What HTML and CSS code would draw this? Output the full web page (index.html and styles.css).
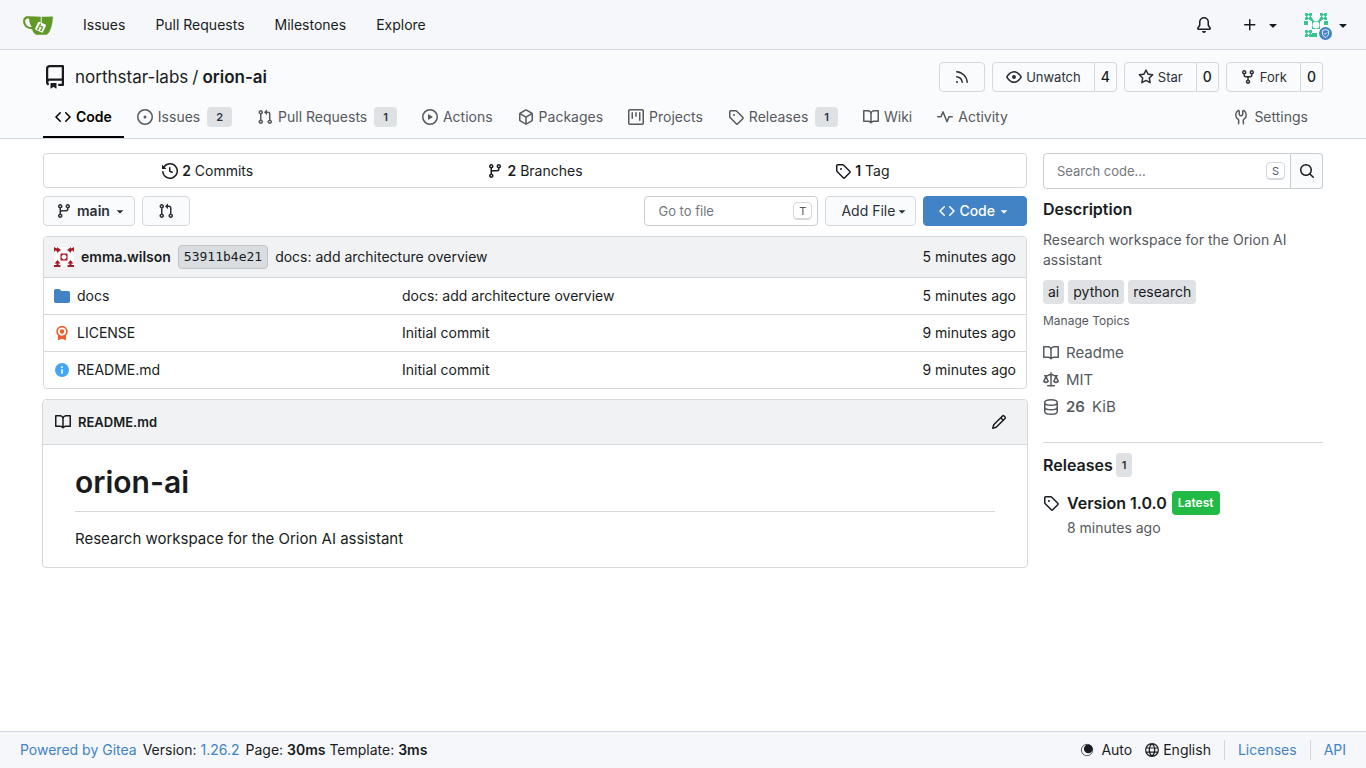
FILE: index.html
```html
<!DOCTYPE html>
<html lang="en">
<head>
  <meta charset="UTF-8">
  <meta name="viewport" content="width=device-width, initial-scale=1.0">
  <title>northstar-labs/orion-ai - Gitea</title>
  <link rel="stylesheet" href="styles.css">
</head>
<body>

  <!-- Icon sprite -->
  <svg class="sprite" aria-hidden="true">
    <symbol id="i-code" viewBox="0 0 16 16"><path d="m11.28 3.22 4.25 4.25a.75.75 0 0 1 0 1.06l-4.25 4.25a.749.749 0 0 1-1.275-.326.75.75 0 0 1 .215-.734L13.94 8l-3.72-3.72a.749.749 0 0 1 .326-1.275.75.75 0 0 1 .734.215m-6.56 0a.751.751 0 0 1 1.042.018.751.751 0 0 1 .018 1.042L2.06 8l3.72 3.72a.749.749 0 0 1-.326 1.275.75.75 0 0 1-.734-.215L.47 8.53a.75.75 0 0 1 0-1.06Z"/></symbol>
    <symbol id="i-issue" viewBox="0 0 16 16"><path d="M8 9.5a1.5 1.5 0 1 0 0-3 1.5 1.5 0 0 0 0 3"/><path d="M8 0a8 8 0 1 1 0 16A8 8 0 0 1 8 0M1.5 8a6.5 6.5 0 1 0 13 0 6.5 6.5 0 0 0-13 0"/></symbol>
    <symbol id="i-pull" viewBox="0 0 16 16"><path d="M1.5 3.25a2.25 2.25 0 1 1 3 2.122v5.256a2.251 2.251 0 1 1-1.5 0V5.372A2.25 2.25 0 0 1 1.5 3.25m5.677-.177L9.573.677A.25.25 0 0 1 10 .854V2.5h1A2.5 2.5 0 0 1 13.5 5v5.628a2.251 2.251 0 1 1-1.5 0V5a1 1 0 0 0-1-1h-1v1.646a.25.25 0 0 1-.427.177L7.177 3.427a.25.25 0 0 1 0-.354M3.75 2.5a.75.75 0 1 0 0 1.5.75.75 0 0 0 0-1.5m0 9.5a.75.75 0 1 0 0 1.5.75.75 0 0 0 0-1.5m8.25.75a.75.75 0 1 0 1.5 0 .75.75 0 0 0-1.5 0"/></symbol>
    <symbol id="i-play" viewBox="0 0 16 16"><path d="M8 0a8 8 0 1 1 0 16A8 8 0 0 1 8 0M1.5 8a6.5 6.5 0 1 0 13 0 6.5 6.5 0 0 0-13 0m4.879-2.773 4.264 2.559a.25.25 0 0 1 0 .428l-4.264 2.559A.25.25 0 0 1 6 10.559V5.442a.25.25 0 0 1 .379-.215"/></symbol>
    <symbol id="i-package" viewBox="0 0 16 16"><path d="m8.878.392 5.25 3.045c.54.314.872.89.872 1.514v6.098a1.75 1.75 0 0 1-.872 1.514l-5.25 3.045a1.75 1.75 0 0 1-1.756 0l-5.25-3.045A1.75 1.75 0 0 1 1 11.049V4.951c0-.624.332-1.201.872-1.514L7.122.392a1.75 1.75 0 0 1 1.756 0M7.875 1.69l-4.63 2.685L8 7.133l4.755-2.758-4.63-2.685a.25.25 0 0 0-.25 0M2.5 5.677v5.372c0 .09.047.171.125.216l4.625 2.683V8.432Zm6.25 8.271 4.625-2.683a.25.25 0 0 0 .125-.216V5.677L8.75 8.432Z"/></symbol>
    <symbol id="i-project" viewBox="0 0 16 16"><path d="M1.75 0h12.5C15.216 0 16 .784 16 1.75v12.5A1.75 1.75 0 0 1 14.25 16H1.75A1.75 1.75 0 0 1 0 14.25V1.75C0 .784.784 0 1.75 0M1.5 1.75v12.5c0 .138.112.25.25.25h12.5a.25.25 0 0 0 .25-.25V1.75a.25.25 0 0 0-.25-.25H1.75a.25.25 0 0 0-.25.25M11.75 3a.75.75 0 0 1 .75.75v7.5a.75.75 0 0 1-1.5 0v-7.5a.75.75 0 0 1 .75-.75m-8.25.75a.75.75 0 0 1 1.5 0v5.5a.75.75 0 0 1-1.5 0ZM8 3a.75.75 0 0 1 .75.75v3.5a.75.75 0 0 1-1.5 0v-3.5A.75.75 0 0 1 8 3"/></symbol>
    <symbol id="i-tag" viewBox="0 0 16 16"><path d="M1 7.775V2.75C1 1.784 1.784 1 2.75 1h5.025c.464 0 .91.184 1.238.513l6.25 6.25a1.75 1.75 0 0 1 0 2.474l-5.026 5.026a1.75 1.75 0 0 1-2.474 0l-6.25-6.25A1.75 1.75 0 0 1 1 7.775m1.5 0c0 .066.026.13.073.177l6.25 6.25a.25.25 0 0 0 .354 0l5.025-5.025a.25.25 0 0 0 0-.354l-6.25-6.25a.25.25 0 0 0-.177-.073H2.75a.25.25 0 0 0-.25.25ZM6 5a1 1 0 1 1 0 2 1 1 0 0 1 0-2"/></symbol>
    <symbol id="i-book" viewBox="0 0 16 16"><path d="M0 1.75A.75.75 0 0 1 .75 1h4.253c1.227 0 2.317.59 3 1.501A3.74 3.74 0 0 1 11.006 1h4.245a.75.75 0 0 1 .75.75v10.5a.75.75 0 0 1-.75.75h-4.507a2.25 2.25 0 0 0-1.591.659l-.622.621a.75.75 0 0 1-1.06 0l-.622-.621A2.25 2.25 0 0 0 5.258 13H.75a.75.75 0 0 1-.75-.75Zm7.251 10.324.004-5.073-.002-2.253A2.25 2.25 0 0 0 5.003 2.5H1.5v9h3.757a3.75 3.75 0 0 1 1.994.574M8.755 4.75l-.004 7.322a3.75 3.75 0 0 1 1.992-.572H14.5v-9h-3.495a2.25 2.25 0 0 0-2.25 2.25"/></symbol>
    <symbol id="i-pulse" viewBox="0 0 16 16"><path d="M6 2c.306 0 .582.187.696.471L10 10.731l1.304-3.26A.75.75 0 0 1 12 7h3.25a.75.75 0 0 1 0 1.5h-2.742l-1.812 4.528a.751.751 0 0 1-1.392 0L6 4.77 4.696 8.03A.75.75 0 0 1 4 8.5H.75a.75.75 0 0 1 0-1.5h2.742l1.812-4.529A.75.75 0 0 1 6 2"/></symbol>
    <symbol id="i-tools" viewBox="0 0 16 16"><path d="M5.433 2.304A4.492 4.492 0 0 0 3.5 6c0 1.598.832 3.002 2.09 3.802.518.328.929.923.902 1.64v.008l-.164 3.337a.75.75 0 1 1-1.498-.073l.163-3.33c.002-.085-.05-.216-.207-.316A5.996 5.996 0 0 1 2 6a5.994 5.994 0 0 1 2.567-4.92 1.482 1.482 0 0 1 1.673-.04c.462.296.76.827.76 1.423v2.82c0 .082.041.16.11.206l.75.51a.25.25 0 0 0 .28 0l.75-.51A.249.249 0 0 0 9 5.282V2.463c0-.596.298-1.127.76-1.423a1.482 1.482 0 0 1 1.673.04A5.994 5.994 0 0 1 14 6a5.996 5.996 0 0 1-2.786 5.068c-.157.1-.209.23-.207.315l.163 3.33a.752.752 0 0 1-1.094.714.75.75 0 0 1-.404-.64l-.164-3.345c-.027-.717.384-1.312.902-1.64A4.496 4.496 0 0 0 12.5 6a4.492 4.492 0 0 0-1.933-3.696c-.024.017-.067.067-.067.159v2.82a1.75 1.75 0 0 1-.767 1.448l-.75.51a1.75 1.75 0 0 1-1.966 0l-.75-.51A1.75 1.75 0 0 1 5.5 5.282V2.463c0-.092-.043-.142-.067-.159"/></symbol>
    <symbol id="i-history" viewBox="0 0 16 16"><path d="m.427 1.927 1.215 1.215a8.002 8.002 0 1 1-1.6 5.685.75.75 0 1 1 1.493-.154 6.5 6.5 0 1 0 1.18-4.458l1.358 1.358A.25.25 0 0 1 3.896 6H.25A.25.25 0 0 1 0 5.75V2.104a.25.25 0 0 1 .427-.177M7.75 4a.75.75 0 0 1 .75.75v2.992l2.028.812a.75.75 0 0 1-.557 1.392l-2.5-1A.75.75 0 0 1 7 8.25v-3.5A.75.75 0 0 1 7.75 4"/></symbol>
    <symbol id="i-branch" viewBox="0 0 16 16"><path d="M9.5 3.25a2.25 2.25 0 1 1 3 2.122V6A2.5 2.5 0 0 1 10 8.5H6a1 1 0 0 0-1 1v1.128a2.251 2.251 0 1 1-1.5 0V5.372a2.25 2.25 0 1 1 1.5 0v1.836A2.5 2.5 0 0 1 6 7h4a1 1 0 0 0 1-1v-.628A2.25 2.25 0 0 1 9.5 3.25m-6 0a.75.75 0 1 0 1.5 0 .75.75 0 0 0-1.5 0m8.25-.75a.75.75 0 1 0 0 1.5.75.75 0 0 0 0-1.5M4.25 12a.75.75 0 1 0 0 1.5.75.75 0 0 0 0-1.5"/></symbol>
    <symbol id="i-repo" viewBox="0 0 16 16"><path d="M2 2.5A2.5 2.5 0 0 1 4.5 0h8.75a.75.75 0 0 1 .75.75v12.5a.75.75 0 0 1-.75.75h-2.5a.75.75 0 0 1 0-1.5h1.75v-2h-8a1 1 0 0 0-.714 1.7.75.75 0 1 1-1.072 1.05A2.5 2.5 0 0 1 2 11.5Zm10.5-1h-8a1 1 0 0 0-1 1v6.708A2.5 2.5 0 0 1 4.5 9h8ZM5 12.25a.25.25 0 0 1 .25-.25h3.5a.25.25 0 0 1 .25.25v3.25a.25.25 0 0 1-.4.2l-1.45-1.087a.25.25 0 0 0-.3 0L5.4 15.7a.25.25 0 0 1-.4-.2Z"/></symbol>
    <symbol id="i-rss" viewBox="0 0 16 16"><path d="M2.002 2.725a.75.75 0 0 1 .797-.699C8.79 2.42 13.58 7.21 13.974 13.201a.75.75 0 0 1-1.497.098 10.502 10.502 0 0 0-9.776-9.776.747.747 0 0 1-.7-.798ZM2.84 7.05h-.002a7.002 7.002 0 0 1 6.113 6.111.75.75 0 0 1-1.49.178 5.503 5.503 0 0 0-4.8-4.8.75.75 0 0 1 .179-1.489ZM2 13a1 1 0 1 1 2 0 1 1 0 0 1-2 0"/></symbol>
    <symbol id="i-eye" viewBox="0 0 16 16"><path d="M8 2c1.981 0 3.671.992 4.933 2.078 1.27 1.091 2.187 2.345 2.637 3.023a1.62 1.62 0 0 1 0 1.798c-.45.678-1.367 1.932-2.637 3.023C11.67 13.008 9.981 14 8 14s-3.671-.992-4.933-2.078C1.797 10.83.88 9.576.43 8.898a1.62 1.62 0 0 1 0-1.798c.45-.677 1.367-1.931 2.637-3.022C4.33 2.992 6.019 2 8 2M1.679 7.932a.12.12 0 0 0 0 .136c.411.622 1.241 1.75 2.366 2.717C5.176 11.758 6.527 12.5 8 12.5s2.825-.742 3.955-1.715c1.124-.967 1.954-2.096 2.366-2.717a.12.12 0 0 0 0-.136c-.412-.621-1.242-1.75-2.366-2.717C10.824 4.242 9.473 3.5 8 3.5s-2.824.742-3.955 1.715c-1.124.967-1.954 2.096-2.366 2.717M8 10a2 2 0 1 1 0-4 2 2 0 0 1 0 4"/></symbol>
    <symbol id="i-star" viewBox="0 0 16 16"><path d="M8 .25a.75.75 0 0 1 .673.418l1.882 3.815 4.21.612a.75.75 0 0 1 .416 1.279l-3.046 2.97.719 4.192a.751.751 0 0 1-1.088.791L8 12.347l-3.766 1.98a.75.75 0 0 1-1.088-.79l.72-4.194L.818 6.374a.75.75 0 0 1 .416-1.28l4.21-.611L7.327.668A.75.75 0 0 1 8 .25m0 2.445L6.615 5.5a.75.75 0 0 1-.564.41l-3.097.45 2.24 2.184a.75.75 0 0 1 .216.664l-.528 3.084 2.769-1.456a.75.75 0 0 1 .698 0l2.77 1.456-.53-3.084a.75.75 0 0 1 .216-.664l2.24-2.183-3.096-.45a.75.75 0 0 1-.564-.41z"/></symbol>
    <symbol id="i-fork" viewBox="0 0 16 16"><path d="M5 5.372v.878c0 .414.336.75.75.75h4.5a.75.75 0 0 0 .75-.75v-.878a2.25 2.25 0 1 1 1.5 0v.878a2.25 2.25 0 0 1-2.25 2.25h-1.5v2.128a2.251 2.251 0 1 1-1.5 0V8.5h-1.5A2.25 2.25 0 0 1 3.5 6.25v-.878a2.25 2.25 0 1 1 1.5 0M5 3.25a.75.75 0 1 0-1.5 0 .75.75 0 0 0 1.5 0m6.75.75a.75.75 0 1 0 0-1.5.75.75 0 0 0 0 1.5m-3 8.75a.75.75 0 1 0-1.5 0 .75.75 0 0 0 1.5 0"/></symbol>
    <symbol id="i-bell" viewBox="0 0 16 16"><path d="M8 16a2 2 0 0 0 1.985-1.75c.017-.137-.097-.25-.235-.25h-3.5c-.138 0-.252.113-.235.25A2 2 0 0 0 8 16M3 5a5 5 0 0 1 10 0v2.947q0 .076.042.139l1.703 2.555A1.519 1.519 0 0 1 13.482 13H2.518a1.516 1.516 0 0 1-1.263-2.36l1.703-2.554A.26.26 0 0 0 3 7.947Zm5-3.5A3.5 3.5 0 0 0 4.5 5v2.947c0 .346-.102.683-.294.97l-1.703 2.556a.017.017 0 0 0-.003.01l.001.006q0 .004.004.006l.006.004.007.001h10.964l.007-.001.006-.004.004-.006.001-.007-.003-.01-1.703-2.554a1.75 1.75 0 0 1-.294-.97V5A3.5 3.5 0 0 0 8 1.5"/></symbol>
    <symbol id="i-plus" viewBox="0 0 16 16"><path d="M7.75 2a.75.75 0 0 1 .75.75V7h4.25a.75.75 0 0 1 0 1.5H8.5v4.25a.75.75 0 0 1-1.5 0V8.5H2.75a.75.75 0 0 1 0-1.5H7V2.75A.75.75 0 0 1 7.75 2"/></symbol>
    <symbol id="i-down" viewBox="0 0 16 16"><path d="m4.427 7.427 3.396 3.396a.25.25 0 0 0 .354 0l3.396-3.396A.25.25 0 0 0 11.396 7H4.604a.25.25 0 0 0-.177.427"/></symbol>
    <symbol id="i-search" viewBox="0 0 16 16"><path d="M10.68 11.74a6 6 0 0 1-7.922-8.982 6 6 0 0 1 8.982 7.922l3.04 3.04a.749.749 0 0 1-.326 1.275.75.75 0 0 1-.734-.215ZM11.5 7a4.499 4.499 0 1 0-8.997 0A4.499 4.499 0 0 0 11.5 7"/></symbol>
    <symbol id="i-pencil" viewBox="0 0 16 16"><path d="M11.013 1.427a1.75 1.75 0 0 1 2.474 0l1.086 1.086a1.75 1.75 0 0 1 0 2.474l-8.61 8.61c-.21.21-.47.364-.756.445l-3.251.93a.75.75 0 0 1-.927-.928l.929-3.25c.081-.286.235-.547.445-.758ZM11.189 6.25 9.75 4.81l-6.286 6.287a.25.25 0 0 0-.064.108l-.558 1.953 1.953-.558a.25.25 0 0 0 .108-.064Zm1.238-3.763a.25.25 0 0 0-.354 0L10.811 3.75l1.439 1.44 1.263-1.263a.25.25 0 0 0 0-.354Z"/></symbol>
    <symbol id="i-folder" viewBox="0 0 16 16"><path d="M1.75 1A1.75 1.75 0 0 0 0 2.75v10.5C0 14.216.784 15 1.75 15h12.5A1.75 1.75 0 0 0 16 13.25v-8.5A1.75 1.75 0 0 0 14.25 3H7.5a.25.25 0 0 1-.2-.1l-.9-1.2C6.07 1.26 5.55 1 5 1Z"/></symbol>
    <symbol id="i-license" viewBox="0 0 16 16"><circle cx="8" cy="6.5" r="4.9" fill="none" stroke="currentColor" stroke-width="1.6"/><circle cx="8" cy="6.5" r="2.2"/><path d="M4 10.2 8 12.2l4-2V15.2L8 13.8l-4 1.4Z"/></symbol>
    <symbol id="i-info" viewBox="0 0 16 16"><path fill-rule="evenodd" d="M8 1a7 7 0 1 0 0 14A7 7 0 0 0 8 1M7.200 4.300h1.600v1.600H7.200ZM7.200 7.200h1.600v4.500H7.200Z"/></symbol>
    <symbol id="i-law" viewBox="0 0 16 16"><path d="M8 .8v12.800M4.700 13.700h6.600M1.700 3.800h2.600L6.400 2.700h3.200l2.100 1.100h2.600M3 4.500.8 9.400c1.200 1.100 3.200 1.100 4.400 0ZM13 4.500l-2.200 4.900c1.200 1.100 3.200 1.100 4.400 0Z" fill="none" stroke="currentColor" stroke-width="1.500" stroke-linecap="round" stroke-linejoin="round"/></symbol>
    <symbol id="i-database" viewBox="0 0 16 16"><path d="M14.250 3.500c0 1.500-2.800 2.750-6.250 2.750S1.750 5 1.750 3.500 4.550.75 8 .75s6.250 1.250 6.250 2.750v9c0 1.500-2.800 2.750-6.250 2.750S1.750 14 1.750 12.500v-9M1.750 8c0 1.500 2.800 2.750 6.250 2.750S14.250 9.500 14.250 8" fill="none" stroke="currentColor" stroke-width="1.500"/></symbol>
    <symbol id="i-globe" viewBox="0 0 16 16"><path d="M8 .75a7.250 7.250 0 1 0 0 14.500A7.250 7.250 0 0 0 8 .75C5.900 2.600 4.900 5 4.900 8s1 5.400 3.100 7.250C10.100 13.400 11.100 11 11.100 8S10.100 2.600 8 .75M1.200 5.700h13.600M1.200 10.300h13.600" fill="none" stroke="currentColor" stroke-width="1.400"/></symbol>
    <symbol id="i-auto" viewBox="0 0 16 16"><circle cx="8" cy="8" r="6.500" fill="none" stroke="currentColor" stroke-width=".8"/><circle cx="9.500" cy="6.700" r="5"/></symbol>
    <!-- identicon tiles -->
    <symbol id="tile-cross" viewBox="0 0 6 6"><path d="M0 0h2l1 1 1-1h2v2L5 3l1 1v2H4L3 5 2 6H0V4l1-1-1-1Z"/><path d="M3 1.700 4.300 3 3 4.300 1.700 3Z" fill="#fff"/></symbol>
    <symbol id="tile-arrow" viewBox="0 0 7 7"><path d="M0 0 3 1.500V0l4 3-4 3V4.200L1.500 3.500 0 5Z"/></symbol>
  </svg>

  <nav class="navbar">
    <div class="navbar-left">
      <a class="logo" href="#" aria-label="Dashboard">
        <svg width="30" height="30" viewBox="0 0 30 30">
          <path d="M5.500 6.300C2.300 5.900 0 8 .1 11.300c.1 4.700 3.500 7.800 9 7.900.8 2.800 2.200 5 4.300 5.500h10c3.200-.5 6-8.700 6.500-17.100.1-.8-.3-1.200-1-1.200-7 .4-15 .4-23.400-.1" fill="#609926"/>
          <path d="M3.600 8.700C1.900 9.400 1.800 12 3 14.300c1 2 3 2.900 5.700 2.800C7.200 14.800 6.300 12 6 8.700c-.8-.2-1.700-.3-2.400 0" fill="#fff"/>
          <path d="M18.200 6.300v7" stroke="#fff" stroke-width=".9"/>
          <rect x="13.200" y="12.800" width="8.600" height="8.800" rx="1" transform="rotate(25 17.500 17.200)" fill="#fff"/>
          <path d="m17.600 13.500-2.700 5.800M16.600 15.800l3 1.300-1.500 3.300" fill="none" stroke="#609926" stroke-width="1.200"/>
          <circle cx="15" cy="19" r=".9" fill="#609926"/>
          <circle cx="18" cy="20.300" r=".9" fill="#609926"/>
        </svg>
      </a>
      <a href="#">Issues</a>
      <a href="#">Pull Requests</a>
      <a href="#">Milestones</a>
      <a href="#">Explore</a>
    </div>
    <div class="navbar-right">
      <a href="#" aria-label="Notifications"><svg class="icon"><use href="#i-bell"/></svg></a>
      <button class="menu-button" aria-label="Create">
        <svg class="icon"><use href="#i-plus"/></svg>
        <svg class="icon"><use href="#i-down"/></svg>
      </button>
      <button class="menu-button profile" aria-label="Profile">
        <span class="avatar-wrap">
          <svg width="24" height="24" viewBox="0 0 24 24" fill="#34c792">
            <rect width="24" height="24" fill="#fff"/>
            <use href="#tile-cross" x="1" y="0" width="7" height="7"/>
            <use href="#tile-cross" x="16" y="0" width="7" height="7"/>
            <path d="M0 8h4v4H0ZM20 8h4v4h-4ZM8 5l2 3H6ZM16 5l-2 3h4ZM8 20h5v4H8Z"/>
            <rect x="8" y="8" width="8" height="8"/>
            <circle cx="12" cy="12" r="3.500" fill="#fff"/>
            <use href="#tile-cross" x="1" y="17" width="7" height="7"/>
          </svg>
          <svg class="admin-badge" viewBox="0 0 13 13">
            <circle cx="6.500" cy="6.500" r="6.500" fill="#4183c4"/>
            <path d="M6.500 2.500 9.600 3.700v2.500c0 2-1.200 3.300-3.100 4.200-1.900-.9-3.100-2.200-3.100-4.200V3.700ZM5 6.300l1.100 1.100 2-2" fill="none" stroke="#fff" stroke-width=".9"/>
          </svg>
        </span>
        <svg class="icon"><use href="#i-down"/></svg>
      </button>
    </div>
  </nav>

  <header class="repo-header">
    <div class="container">
      <div class="repo-title-row">
        <div class="repo-title">
          <svg class="icon icon-24"><use href="#i-repo"/></svg>
          <div><a href="#">northstar-labs</a><span class="slash">/</span><a class="repo-name" href="#">orion-ai</a></div>
        </div>
        <div class="repo-buttons">
          <button class="button rss" aria-label="RSS Feed"><svg class="icon"><use href="#i-rss"/></svg></button>
          <div class="labeled-button">
            <button class="button"><svg class="icon"><use href="#i-eye"/></svg>Unwatch</button>
            <a class="count" href="#">4</a>
          </div>
          <div class="labeled-button">
            <button class="button"><svg class="icon"><use href="#i-star"/></svg>Star</button>
            <a class="count" href="#">0</a>
          </div>
          <div class="labeled-button">
            <button class="button"><svg class="icon"><use href="#i-fork"/></svg>Fork</button>
            <a class="count" href="#">0</a>
          </div>
        </div>
      </div>
      <nav class="tabs">
        <a class="tab active" href="#"><svg class="icon"><use href="#i-code"/></svg>Code</a>
        <a class="tab" href="#"><svg class="icon"><use href="#i-issue"/></svg>Issues<span class="label">2</span></a>
        <a class="tab" href="#"><svg class="icon"><use href="#i-pull"/></svg>Pull Requests<span class="label">1</span></a>
        <a class="tab" href="#"><svg class="icon"><use href="#i-play"/></svg>Actions</a>
        <a class="tab" href="#"><svg class="icon"><use href="#i-package"/></svg>Packages</a>
        <a class="tab" href="#"><svg class="icon"><use href="#i-project"/></svg>Projects</a>
        <a class="tab" href="#"><svg class="icon"><use href="#i-tag"/></svg>Releases<span class="label">1</span></a>
        <a class="tab" href="#"><svg class="icon"><use href="#i-book"/></svg>Wiki</a>
        <a class="tab" href="#"><svg class="icon"><use href="#i-pulse"/></svg>Activity</a>
        <a class="tab settings" href="#"><svg class="icon"><use href="#i-tools"/></svg>Settings</a>
      </nav>
    </div>
  </header>

  <main class="container repo-grid">
    <div class="repo-main">
      <div class="stats">
        <a href="#"><svg class="icon"><use href="#i-history"/></svg><span><b>2</b> Commits</span></a>
        <a href="#"><svg class="icon"><use href="#i-branch"/></svg><span><b>2</b> Branches</span></a>
        <a href="#"><svg class="icon"><use href="#i-tag"/></svg><span><b>1</b> Tag</span></a>
      </div>

      <div class="toolbar">
        <button class="button branch"><svg class="icon"><use href="#i-branch"/></svg><b>main</b><svg class="icon caret"><use href="#i-down"/></svg></button>
        <button class="button compare" aria-label="Compare"><svg class="icon"><use href="#i-pull"/></svg></button>
        <div class="file-search">
          <input type="text" placeholder="Go to file" aria-label="Go to file">
          <kbd>T</kbd>
        </div>
        <button class="button add-file">Add File<svg class="icon caret"><use href="#i-down"/></svg></button>
        <button class="button primary"><svg class="icon"><use href="#i-code"/></svg>Code<svg class="icon caret"><use href="#i-down"/></svg></button>
      </div>

      <table class="files">
        <colgroup>
          <col class="col-name">
          <col>
          <col class="col-age">
        </colgroup>
        <thead>
          <tr>
            <th colspan="2">
              <div class="last-commit">
                <svg width="20" height="20" viewBox="0 0 20 20" fill="#a51d24">
                  <rect width="20" height="20" fill="#fff"/>
                  <use href="#tile-arrow" x="0" y="0" width="7" height="7"/>
                  <use href="#tile-arrow" x="0" y="0" width="7" height="7" transform="matrix(-1 0 0 1 20 0)"/>
                  <path d="M6.500 6.500h7v7h-7Zm3.500 1L8 8.500 7.500 10l.5 1.500 2 1 2-1 .5-1.500-.5-1.500Z" fill-rule="evenodd"/>
                  <path d="m3.500 13 3 3.500H4.500V18H6.500v2H0v-2h2.500v-1.500H.5ZM16.500 13l3 3.500h-2V18H20v2h-6.500v-2h2v-1.500h-2Z"/>
                </svg>
                <a class="author" href="#">emma.wilson</a>
                <a class="sha" href="#">53911b4e21</a>
                <a class="message" href="#">docs: add architecture overview</a>
              </div>
            </th>
            <th class="age">5 minutes ago</th>
          </tr>
        </thead>
        <tbody>
          <tr>
            <td class="name"><a href="#"><svg class="icon folder"><use href="#i-folder"/></svg>docs</a></td>
            <td><a href="#">docs: add architecture overview</a></td>
            <td class="age">5 minutes ago</td>
          </tr>
          <tr>
            <td class="name"><a href="#"><svg class="icon license"><use href="#i-license"/></svg>LICENSE</a></td>
            <td><a href="#">Initial commit</a></td>
            <td class="age">9 minutes ago</td>
          </tr>
          <tr>
            <td class="name"><a href="#"><svg class="icon info"><use href="#i-info"/></svg>README.md</a></td>
            <td><a href="#">Initial commit</a></td>
            <td class="age">9 minutes ago</td>
          </tr>
        </tbody>
      </table>

      <section class="readme">
        <div class="readme-header">
          <svg class="icon"><use href="#i-book"/></svg>
          <a href="#">README.md</a>
          <a class="edit" href="#" aria-label="Edit file"><svg class="icon"><use href="#i-pencil"/></svg></a>
        </div>
        <article class="markup">
          <h1>orion-ai</h1>
          <p>Research workspace for the Orion AI assistant</p>
        </article>
      </section>
    </div>

    <aside class="sidebar">
      <form class="code-search">
        <div class="code-search-input">
          <input type="text" placeholder="Search code…" aria-label="Search code">
          <kbd>S</kbd>
        </div>
        <button type="button" aria-label="Search"><svg class="icon"><use href="#i-search"/></svg></button>
      </form>
      <h2>Description</h2>
      <p class="description">Research workspace for the Orion AI assistant</p>
      <div class="topics">
        <a href="#">ai</a>
        <a href="#">python</a>
        <a href="#">research</a>
      </div>
      <a class="manage-topics" href="#">Manage Topics</a>
      <div class="meta">
        <a href="#"><svg class="icon"><use href="#i-book"/></svg>Readme</a>
        <a href="#"><svg class="icon"><use href="#i-law"/></svg>MIT</a>
        <span><svg class="icon"><use href="#i-database"/></svg><b>26</b> KiB</span>
      </div>
      <div class="releases">
        <h2><a href="#">Releases</a><span class="label">1</span></h2>
        <div class="release">
          <svg class="icon"><use href="#i-tag"/></svg>
          <div>
            <div class="release-title"><a href="#">Version 1.0.0</a><span class="latest">Latest</span></div>
            <div class="release-date">8 minutes ago</div>
          </div>
        </div>
      </div>
    </aside>
  </main>

  <footer class="page-footer">
    <div class="footer-left">
      <a href="#">Powered by Gitea</a>
      <span>Version: <a href="#">1.26.2</a></span>
      <span>Page: <b>30ms</b> Template: <b>3ms</b></span>
    </div>
    <div class="footer-right">
      <button class="theme"><svg class="icon icon-14"><use href="#i-auto"/></svg>Auto</button>
      <button class="language"><svg class="icon icon-14"><use href="#i-globe"/></svg>English</button>
      <a href="#">Licenses</a>
      <a href="#">API</a>
    </div>
  </footer>

</body>
</html>
```
FILE: styles.css
```css
* {
  box-sizing: border-box;
}

body {
  margin: 0;
  min-height: 100vh;
  display: flex;
  flex-direction: column;
  font-family: Inter, "Liberation Sans", sans-serif;
  font-size: 14px;
  line-height: 20px;
  color: #181c21;
  background-color: #fff;
}

a {
  color: inherit;
  text-decoration: none;
}

b {
  font-weight: 600;
}

button,
input {
  font: inherit;
  color: inherit;
}

button {
  padding: 0;
  border: 0;
  background: none;
  cursor: pointer;
}

.sprite {
  display: none;
}

.icon {
  width: 16px;
  height: 16px;
  flex-shrink: 0;
  fill: currentColor;
}

.icon-14 {
  width: 14px;
  height: 14px;
}

.icon-24 {
  width: 24px;
  height: 24px;
}

.icon.caret {
  width: 14px;
  height: 14px;
  margin-left: -2px;
}

.container {
  width: 100%;
  max-width: 1280px;
  margin: 0 auto;
}

/* Navbar */
.navbar {
  display: flex;
  justify-content: space-between;
  height: 50px;
  padding: 0 15px 0 23px;
  background-color: #f6f7fa;
  border-bottom: 1px solid #d0d7de;
}

.navbar-left,
.navbar-right {
  display: flex;
  align-items: center;
}

.navbar-left {
  gap: 30px;
}

.navbar-right {
  gap: 30px;
}

.logo {
  display: flex;
}

.menu-button {
  display: flex;
  align-items: center;
  gap: 7px;
}

.navbar-right a {
  display: flex;
}

.profile {
  gap: 7px;
  margin-left: -7px;
}

.avatar-wrap {
  position: relative;
  display: flex;
}

.admin-badge {
  position: absolute;
  right: -4px;
  bottom: -3px;
  width: 13px;
  height: 13px;
}

/* Repo header */
.repo-header {
  background-color: #fafbfd;
  border-bottom: 1px solid #d0d7de;
}

.repo-title-row {
  display: flex;
  align-items: center;
  justify-content: space-between;
  padding-top: 12px;
}

.repo-title {
  display: flex;
  align-items: center;
  gap: 8px;
  font-size: 17px;
}

.slash {
  margin: 0 4px;
}

.repo-name {
  font-weight: 600;
}

.repo-buttons {
  display: flex;
  gap: 7px;
}

.button {
  display: inline-flex;
  align-items: center;
  justify-content: center;
  gap: 4px;
  height: 30px;
  padding: 0 14px;
  border: 1px solid #d4d8dc;
  border-radius: 4px;
  background-color: #fafbfc;
  color: #2b3036;
}

.repo-buttons .button {
  font-size: 13px;
}

.button.rss {
  width: 46px;
}

.labeled-button {
  display: flex;
}

.labeled-button .button {
  padding: 0 13px;
  border-radius: 4px 0 0 4px;
}

.count {
  display: flex;
  align-items: center;
  padding: 0 6px;
  border: 1px solid #d4d8dc;
  border-left: 0;
  border-radius: 0 4px 4px 0;
  font-weight: 500;
}

.tabs {
  display: flex;
  gap: 1px;
  margin-top: 4px;
}

.tab {
  display: flex;
  align-items: center;
  gap: 5px;
  height: 42px;
  padding: 2px 12px 0;
  border-bottom: 2px solid transparent;
  color: #56595d;
}

.tab.active {
  font-weight: 600;
  color: #000;
  border-bottom-color: #000;
}

.tab.settings {
  margin-left: auto;
  padding-right: 15px;
}

.label {
  padding: 0 9px;
  border-radius: 4px;
  background-color: #dfe2e5;
  color: #2b3036;
  font-size: 11px;
  font-weight: 600;
}

.tab .label {
  margin-left: 2px;
}

/* Page grid */
.repo-grid {
  display: grid;
  grid-template-columns: minmax(0, 1fr) 280px;
  gap: 16px;
  padding: 14px 0;
  flex: 1;
}

.stats {
  display: flex;
  height: 35px;
  border: 1px solid #d4d8dc;
  border-radius: 4px;
}

.stats a {
  flex: 1;
  display: flex;
  align-items: center;
  justify-content: center;
  gap: 4px;
}

.toolbar {
  display: flex;
  gap: 7px;
  margin: 8px 0 10px;
}

.branch {
  gap: 5px;
  padding: 0 7px 0 12px;
}

.compare {
  width: 48px;
}

.add-file {
  gap: 2px;
  padding: 0 6px 0 15px;
}

.button.primary {
  padding: 0 15px;
  border-color: #4183c4;
  background-color: #4183c4;
  color: #fff;
  font-weight: 500;
}

.file-search,
.code-search-input {
  position: relative;
}

.file-search {
  width: 174px;
  margin-left: auto;
}

input {
  width: 100%;
  height: 30px;
  padding: 0 32px 0 13px;
  border: 1px solid #c8cdd2;
  border-radius: 4px;
  background-color: #fff;
  font-size: 13px;
  outline: 0;
}

input::placeholder {
  color: #74787d;
  opacity: 1;
}

kbd {
  position: absolute;
  top: 50%;
  right: 6px;
  transform: translateY(-50%);
  padding: 0 5px;
  border: 1px solid #d4d8dc;
  border-radius: 4px;
  box-shadow: inset 0 -1px 0 #d4d8dc;
  font-family: inherit;
  font-size: 11px;
  line-height: 16px;
  color: #56595d;
}

/* File list */
.files {
  width: 100%;
  table-layout: fixed;
  border: 1px solid #d4d8dc;
  border-radius: 4px;
  border-spacing: 0;
}

.col-name {
  width: 348px;
}

.col-age {
  width: 160px;
}

.files th,
.files td {
  padding: 0 10px;
  text-align: left;
  font-weight: 400;
}

.files th {
  height: 40px;
  background-color: #f1f2f4;
}

.files td {
  height: 37px;
  border-top: 1px solid #d4d8dc;
}

.files th:first-child {
  border-radius: 3px 0 0 0;
}

.files th:last-child {
  border-radius: 0 3px 0 0;
}

.files .age {
  text-align: right;
}

.name a {
  display: flex;
  align-items: center;
  gap: 7px;
}

.folder {
  color: #4183c4;
}

.license {
  color: #f0592b;
}

.info {
  color: #42a5f5;
}

.last-commit {
  display: flex;
  align-items: center;
  gap: 7px;
}

.author {
  font-weight: 600;
}

.sha {
  padding: 1px 5px;
  border: 1px solid #c0c5ca;
  border-radius: 4px;
  background-color: #d9dde0;
  font-family: "DejaVu Sans Mono", "Liberation Mono", monospace;
  font-size: 13px;
}

/* Readme */
.readme {
  margin: 10px -1px 0;
  border: 1px solid #d4d8dc;
  border-radius: 4px;
}

.readme-header {
  display: flex;
  align-items: center;
  gap: 7px;
  height: 45px;
  padding: 0 12px;
  border-bottom: 1px solid #d4d8dc;
  border-radius: 3px 3px 0 0;
  background-color: #f1f2f4;
  font-size: 13px;
  font-weight: 600;
}

.edit {
  display: flex;
  margin-left: auto;
  padding-right: 8px;
}

.markup {
  padding: 17px 32px;
  font-size: 15px;
  line-height: 22px;
}

.markup h1 {
  margin: 0 0 16px;
  padding-bottom: 9px;
  border-bottom: 1px solid #d4d8dc;
  font-size: 30px;
  font-weight: 600;
  line-height: 40px;
}

.markup p {
  margin: 0;
}

/* Sidebar */
.code-search {
  display: flex;
}

.code-search-input {
  flex: 1;
}

.code-search input {
  height: 36px;
  border-radius: 4px 0 0 4px;
}

.code-search button {
  display: flex;
  align-items: center;
  justify-content: center;
  width: 32px;
  border: 1px solid #c8cdd2;
  border-left: 0;
  border-radius: 0 4px 4px 0;
  background-color: #fafbfc;
}

.sidebar h2 {
  margin: 0;
  font-size: 16px;
  font-weight: 600;
  line-height: 20px;
}

.code-search + h2 {
  margin-top: 10px;
}

.description {
  margin: 11px 0 10px;
  color: #56595d;
}

.topics {
  display: flex;
  gap: 4px;
}

.topics a {
  padding: 2px 5px;
  border-radius: 4px;
  background-color: #dfe1e4;
}

.manage-topics {
  display: block;
  margin-top: 7px;
  font-size: 12px;
  color: #56595d;
}

.meta {
  display: flex;
  flex-direction: column;
  gap: 7px;
  margin-top: 12px;
  font-size: 15px;
  color: #56595d;
}

.meta > * {
  display: flex;
  align-items: center;
  gap: 7px;
}

.releases {
  margin-top: 25px;
  padding-top: 10px;
  border-top: 1px solid #d4d8dc;
}

.releases h2 {
  display: flex;
  align-items: center;
  gap: 3px;
}

.releases .label {
  padding: 2px 6px;
}

.release {
  display: flex;
  gap: 8px;
  margin-top: 14px;
}

.release > .icon {
  margin-top: 4px;
}

.release-title {
  display: flex;
  align-items: center;
  gap: 5px;
  font-size: 16px;
  font-weight: 600;
}

.latest {
  padding: 2px 6px;
  border-radius: 4px;
  background-color: #21ba45;
  color: #fff;
  font-size: 12px;
}

.release-date {
  margin-top: 3px;
  color: #56595d;
}

/* Footer */
.page-footer {
  display: flex;
  justify-content: space-between;
  align-items: center;
  height: 37px;
  padding: 0 20px;
  border-top: 1px solid #d0d7de;
  background-color: #f6f7fa;
}

.footer-left,
.footer-right,
.footer-right button {
  display: flex;
  align-items: center;
}

.footer-left {
  gap: 6px;
}

.footer-left a,
.footer-right a {
  color: #4183c4;
}

.footer-right {
  gap: 13px;
}

.footer-right .theme {
  gap: 7px;
}

.footer-right .language {
  gap: 4px;
}

.footer-right a {
  padding-left: 13px;
  border-left: 1px solid #d0d7de;
}
```
